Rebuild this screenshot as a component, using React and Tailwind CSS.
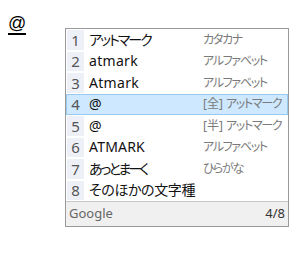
import React from "react";

const rows = [
  { n: 1, text: "アットマーク", note: "カタカナ", fit: "tracking-[-2px]" },
  { n: 2, text: "atmark", note: "アルファベット", fit: "tracking-[0.3px]" },
  { n: 3, text: "Atmark", note: "アルファベット", fit: "tracking-[0.3px]" },
  { n: 4, text: "@", tag: "[全]", note: "アットマーク", selected: true, fit: "" },
  { n: 5, text: "@", tag: "[半]", note: "アットマーク", fit: "" },
  { n: 6, text: "ATMARK", note: "アルファベット", fit: "tracking-[0.2px]" },
  { n: 7, text: "あっとまーく", note: "ひらがな", fit: "tracking-[-2.6px]" },
  { n: 8, text: "そのほかの文字種", note: "", fit: "tracking-[-0.4px]" },
];

const App = () => {
  return (
    <div className="relative w-[304px] h-[263px] bg-white overflow-hidden font-['Noto_Sans','Noto_Sans_CJK_JP',sans-serif]">
      {/* composition string */}
      <div className="pl-[8px] pt-[11px]">
        <span className="inline-block border-b-2 border-black text-[18px] leading-[20px] text-black font-['Liberation_Sans',sans-serif]">
          @
        </span>
      </div>

      {/* candidate window */}
      <div className="absolute left-[65px] top-[28px] w-[224px] border border-[#9a9a9a] bg-white">
        {rows.map((r) => (
          <div
            key={r.n}
            className={
              "flex items-center h-[21.5px] border " +
              (r.selected ? "bg-[#cde8ff] border-[#99c9ef]" : "border-transparent")
            }
          >
            <div
              className={
                "w-[17px] h-full flex items-center justify-center text-[15px] text-[#555] " +
                (r.selected ? "" : "bg-[#eef0f7]")
              }
            >
              {r.n}
            </div>
            <div
              className={
                "flex-1 pl-[5px] text-[14px] text-[#111] whitespace-nowrap leading-none [font-feature-settings:'palt'_1] " +
                r.fit
              }
            >
              {r.text}
            </div>
            <div className="w-[84px] text-[12px] text-[#7a7a7a] whitespace-nowrap leading-none tracking-[-1.3px] [font-feature-settings:'palt'_1]">
              {r.tag && <span className="mr-[3px] tracking-normal">{r.tag}</span>}
              {r.note}
            </div>
          </div>
        ))}
        <div className="flex items-center justify-between h-[25px] border-t border-[#c8c8c8] bg-[#f0f0f0] px-[3px]">
          <span className="text-[13px] text-[#666]">Google</span>
          <span className="text-[13px] text-[#333]">4/8</span>
        </div>
      </div>
    </div>
  );
};

export default App;
